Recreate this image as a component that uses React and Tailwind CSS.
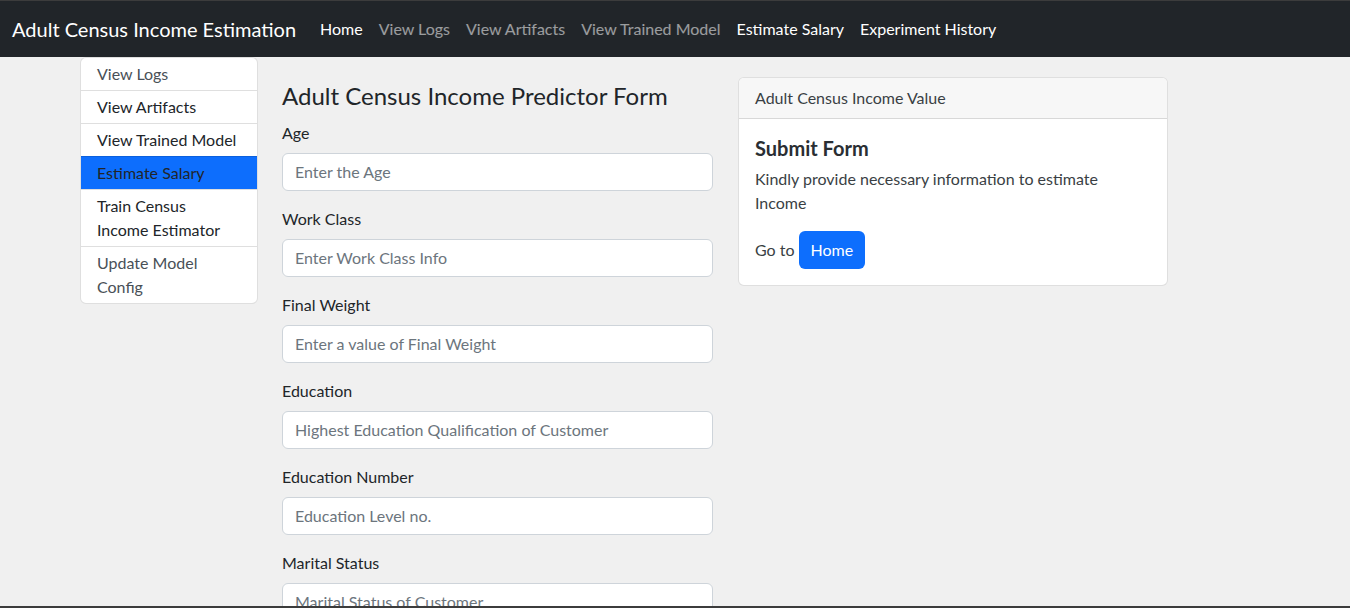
import React from "react";

const fields = [
  ["Age", "Enter the Age"],
  ["Work Class", "Enter Work Class Info"],
  ["Final Weight", "Enter a value of Final Weight"],
  ["Education", "Highest Education Qualification of Customer"],
  ["Education Number", "Education Level no."],
  ["Marital Status", "Marital Status of Customer"],
  ["Occupation", "Occupation of Customer"],
];

const side = [
  { t: ["View Logs"], c: "text-[#495057]" },
  { t: ["View Artifacts"], c: "text-[#212529]" },
  { t: ["View Trained Model"], c: "text-[#212529]" },
  { t: ["Estimate Salary"], c: "text-[#212529] bg-[#0d6efd]" },
  { t: ["Train Census", "Income Estimator"], c: "text-[#212529]" },
  { t: ["Update Model", "Config"], c: "text-[#495057]" },
];

export default function App() {
  return (
    <div className="h-[608px] w-[1350px] overflow-hidden bg-[#f0f0f0] border-t border-b-2 border-[#3c3c3c] flex flex-col font-[Lato,sans-serif] text-[16px] leading-6 text-[#212529]">
      <nav className="h-[56px] shrink-0 bg-[#212529] flex items-center pl-3">
        <span className="text-white text-[20px] leading-[30px] mr-4">
          Adult Census Income Estimation
        </span>
        <div className="flex">
          <span className="px-2 text-white">Home</span>
          <span className="px-2 text-white/55">View Logs</span>
          <span className="px-2 text-white/55">View Artifacts</span>
          <span className="px-2 text-white/55">View Trained Model</span>
          <span className="px-2 text-white">Estimate Salary</span>
          <span className="px-2 text-white">Experiment History</span>
        </div>
      </nav>
      <div className="flex flex-1 min-h-0 pl-[80px] gap-[24px]">
        <div className="w-[178px] shrink-0 self-start">
          <div className="flex flex-col bg-white border border-black/[0.125] rounded-md overflow-hidden">
            {side.map((s, i) => (
              <div
                key={i}
                className={`pl-4 pr-3 py-1 ${i > 0 ? "border-t border-black/[0.125]" : ""} ${s.c}`}
              >
                {s.t.map((line) => (
                  <div key={line}>{line}</div>
                ))}
              </div>
            ))}
          </div>
        </div>
        <div className="w-[431px] shrink-0 pt-[24px]">
          <h4 className="text-[24px] leading-[29px] mb-[11px] font-normal">
            Adult Census Income Predictor Form
          </h4>
          {fields.map(([l, p]) => (
            <div key={l} className="mb-4">
              <div className="mb-2">{l}</div>
              <div className="h-[38px] bg-white border border-[#ced4da] rounded-md px-3 flex items-center text-[#6c757d]">
                {p}
              </div>
            </div>
          ))}
        </div>
        <div className="w-[430px] shrink-0 pt-[20px] ml-px">
          <div className="bg-white border border-black/[0.125] rounded-md overflow-hidden">
            <div className="bg-[#f7f7f7] border-b border-black/[0.125] px-4 py-2 text-[#3a3f44]">
              Adult Census Income Value
            </div>
            <div className="p-4">
              <h5 className="text-[20px] leading-6 font-bold mb-2 mt-px text-[#2a2e33]">
                Submit Form
              </h5>
              <p className="mb-4 -mt-px text-[#3a3f44]">
                Kindly provide necessary information to estimate Income
              </p>
              <div className="flex items-center gap-[4px] text-[#3a3f44]">
                <span>Go to</span>
                <span className="bg-[#0d6efd] text-white rounded-md px-3 h-[38px] flex items-center">
                  Home
                </span>
              </div>
            </div>
          </div>
        </div>
      </div>
    </div>
  );
}
